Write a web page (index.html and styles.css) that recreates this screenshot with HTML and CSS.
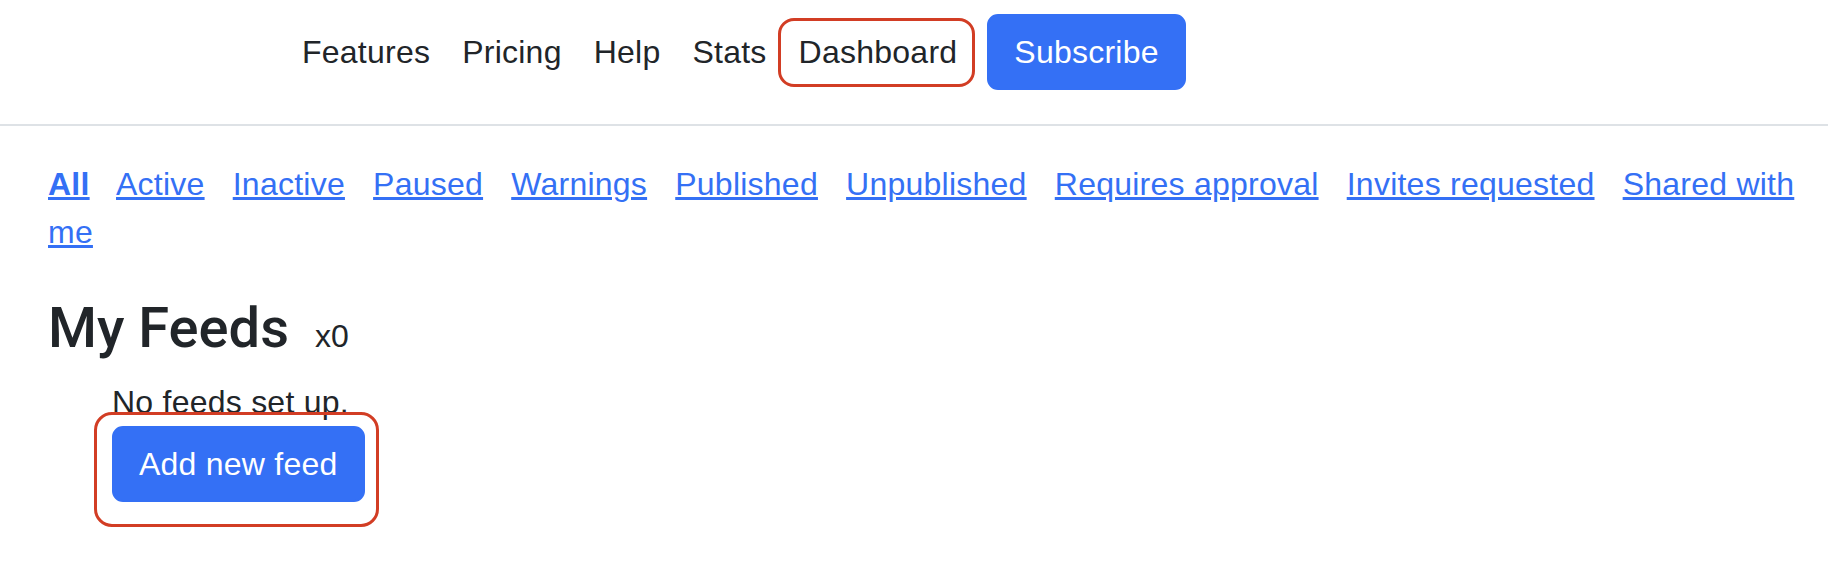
FILE: index.html
```html
<!DOCTYPE html>
<html lang="en">
<head>
<meta charset="utf-8">
<title>My Feeds</title>
<link rel="stylesheet" href="styles.css">
</head>
<body>
<header class="topbar">
  <nav class="nav">
    <a class="nav-link" href="#">Features</a>
    <a class="nav-link" href="#">Pricing</a>
    <a class="nav-link" href="#">Help</a>
    <a class="nav-link" href="#">Stats</a>
    <a class="nav-link nav-link-marked" href="#">Dashboard</a>
    <a class="btn btn-subscribe" href="#">Subscribe</a>
  </nav>
</header>
<main class="main">
  <p class="filters"><a class="filter filter-active" href="#">All</a> <a class="filter" href="#">Active</a> <a class="filter" href="#">Inactive</a> <a class="filter" href="#">Paused</a> <a class="filter" href="#">Warnings</a> <a class="filter" href="#">Published</a> <a class="filter" href="#">Unpublished</a> <a class="filter" href="#">Requires approval</a> <a class="filter" href="#">Invites requested</a> <a class="filter" href="#">Shared with me</a></p>
  <h3 class="title">My Feeds <small class="count">x0</small></h3>
  <div class="feeds">
    <div class="empty">No feeds set up.</div>
    <span class="marked"><a class="btn btn-add" href="#">Add new feed</a></span>
  </div>
</main>
</body>
</html>
```

FILE: styles.css
```css
html, body {
  margin: 0;
  padding: 0;
  background: #ffffff;
}

body {
  font-family: "Liberation Sans", Arial, sans-serif;
  font-size: 32px;
  line-height: 1.5;
  letter-spacing: 0.24px;
  color: #212529;
}

.topbar {
  display: flex;
  align-items: center;
  padding: 12px 0 32px 286px;
  border-bottom: 2px solid #dee2e6;
}

.nav {
  display: flex;
  align-items: center;
}

.nav-link {
  display: block;
  padding: 16px 16px;
  color: #212529;
  text-decoration: none;
}

.nav-link-marked {
  position: relative;
}

.nav-link-marked::after {
  content: "";
  position: absolute;
  top: 6px;
  bottom: 5px;
  left: -5px;
  right: -2px;
  border: 3px solid #d23d24;
  border-radius: 16px;
}

.btn {
  display: inline-block;
  padding: 12px 25px;
  border: 2px solid #3470f5;
  border-radius: 11px;
  background: #3470f5;
  color: #ffffff;
  text-decoration: none;
  line-height: 48px;
}

.btn-subscribe {
  margin-left: 14px;
}

.main {
  padding: 0 24px 70px 48px;
}

.filters {
  margin: 34px 0 39px;
  line-height: 48px;
}

.filter {
  color: #3470f5;
  text-decoration: underline;
  margin-right: 19px;
}

.filter-active {
  font-weight: bold;
}

.title {
  margin: 0 0 16px;
  font-family: Roboto, "Liberation Sans", sans-serif;
  font-size: 56px;
  font-weight: 500;
  line-height: 1.2;
  letter-spacing: 0;
}

.count {
  font-family: "Liberation Sans", Arial, sans-serif;
  font-size: 32px;
  font-weight: 400;
  margin-left: 12px;
}

.feeds {
  padding-left: 64px;
}

.empty {
  line-height: 48px;
}

.marked {
  position: relative;
  display: inline-block;
}

.marked::after {
  content: "";
  position: absolute;
  top: -14px;
  bottom: -25px;
  left: -18px;
  right: -14px;
  border: 3px solid #d23d24;
  border-radius: 18px;
}
```
